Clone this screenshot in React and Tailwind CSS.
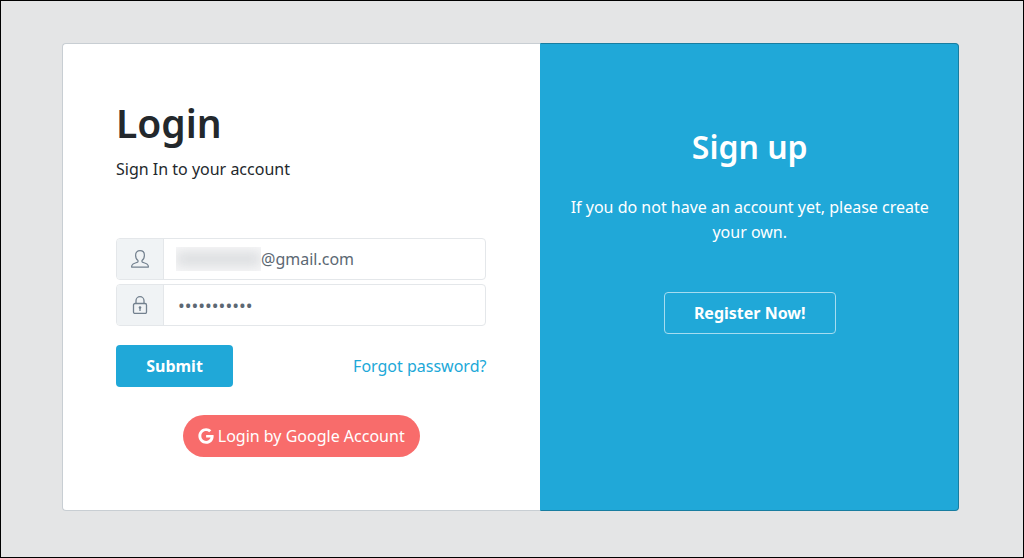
import { useState } from "react";
import { FaGoogle } from "react-icons/fa";

const UserIcon = () => (
  <svg
    viewBox="0 0 18 18"
    className="w-[18px] h-[18px]"
    fill="none"
    stroke="currentColor"
    strokeWidth="1.2"
    strokeLinejoin="round"
    aria-hidden="true"
  >
    <path d="M9 .7C6.300.7 4.600 2.500 4.600 5.200c0 2.300.9 4.300 2.400 5.300v1.300c-.4 1-5.200 1.200-6.100 3.600-.2.600-.3 1.100-.3 1.700h16.800c0-.6-.1-1.100-.3-1.700-.9-2.400-5.700-2.600-6.100-3.600v-1.300c1.500-1 2.400-3 2.400-5.300C13.400 2.500 11.700.7 9 .7z" />
  </svg>
);

const LockIcon = () => (
  <svg
    viewBox="0 0 18 18"
    className="w-[18px] h-[18px]"
    fill="none"
    stroke="currentColor"
    strokeWidth="1.3"
    aria-hidden="true"
  >
    <rect x="2.5" y="7.5" width="13" height="10" rx="1.5" />
    <path d="M5 7.500V4.700a4 4 0 0 1 8 0v2.800M9 11.500V15" />
    <circle cx="9" cy="11.5" r="1.3" fill="currentColor" stroke="none" />
  </svg>
);

export default function App() {
  const [email, setEmail] = useState("@gmail.com");
  const [password, setPassword] = useState("password123");

  return (
    <main className="min-h-screen flex items-center justify-center bg-[#e4e5e6] border border-black pl-[61px] pr-16 pt-10 pb-11 font-['Noto_Sans','Open_Sans',sans-serif] text-base leading-[25px] text-[#23282c]">
      <div className="w-full grid grid-cols-[479fr_419fr]">
        {/* Login */}
        <section className="min-w-0 bg-white border border-r-0 border-[#c8ced3] rounded-l pl-[53px] pr-[54px] py-[53px]">
          <h1 className="text-[39px] leading-[52px] font-semibold mb-2">
            Login
          </h1>
          <p className="mb-14">Sign In to your account</p>

          <form onSubmit={(e) => e.preventDefault()}>
            <div className="flex h-[42px] mb-1 border border-[#e4e7ea] rounded overflow-hidden">
              <label
                htmlFor="email"
                className="w-[47px] shrink-0 flex items-center justify-center bg-[#f0f3f5] border-r border-[#e4e7ea] text-[#73818f]"
              >
                <UserIcon />
              </label>
              <div className="flex flex-1 min-w-0 items-center pl-3">
                <span className="w-[85px] h-6 shrink-0 overflow-hidden bg-[#f8f8f9]">
                  <span className="block h-4 mt-1 bg-[#dddfe1] blur-[6px]" />
                </span>
                <input
                  id="email"
                  type="text"
                  aria-label="Email"
                  value={email}
                  onChange={(e) => setEmail(e.target.value)}
                  className="flex-1 min-w-0 text-[#5c6873] outline-none"
                />
              </div>
            </div>

            <div className="flex h-[42px] mb-[19px] border border-[#e4e7ea] rounded overflow-hidden">
              <label
                htmlFor="password"
                className="w-[47px] shrink-0 flex items-center justify-center bg-[#f0f3f5] border-r border-[#e4e7ea] text-[#73818f]"
              >
                <LockIcon />
              </label>
              <input
                id="password"
                type="password"
                aria-label="Password"
                value={password}
                onChange={(e) => setPassword(e.target.value)}
                className="flex-1 min-w-0 px-[14px] text-lg text-[#5c6873] outline-none"
              />
            </div>

            <div className="flex items-center justify-between mb-7">
              <button
                type="submit"
                className="h-[42px] w-[117px] bg-[#20a8d8] rounded text-white font-bold"
              >
                Submit
              </button>
              <a href="#forgot" className="text-[#20a8d8]">
                Forgot password?
              </a>
            </div>

            <div className="flex justify-center">
              <button
                type="button"
                className="h-[42px] px-[15px] flex items-center gap-1 bg-[#f86c6b] rounded-full text-white"
              >
                <FaGoogle size={16} />
                Login by Google Account
              </button>
            </div>
          </form>
        </section>

        {/* Sign up */}
        <section className="min-w-0 bg-[#20a8d8] border border-[#187da0] border-l-[#20a8d8] rounded-r px-6 pt-[82px] text-white text-center">
          <h2 className="text-[32px] leading-[42px] font-semibold mb-[27px]">
            Sign up
          </h2>
          <p className="mb-[47px]">
            If you do not have an account yet, please create your own.
          </p>
          <button
            type="button"
            className="h-[42px] w-[172px] border border-[#a6dcf0] rounded font-bold"
          >
            Register Now!
          </button>
        </section>
      </div>
    </main>
  );
}
